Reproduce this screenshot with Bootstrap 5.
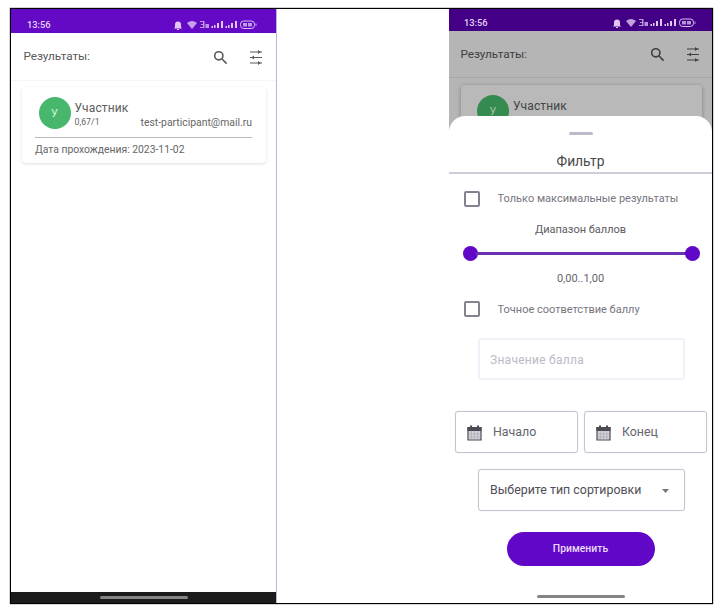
<!DOCTYPE html>
<html lang="ru">
<head>
<meta charset="utf-8">
<meta name="viewport" content="width=device-width, initial-scale=1">
<title>Результаты</title>
<link rel="stylesheet" href="https://cdn.jsdelivr.net/npm/bootstrap@5.3.0/dist/css/bootstrap.min.css">
<style>
body{height:612px;overflow:hidden;background:#fff;font-family:Roboto,sans-serif;color:#666;line-height:1}
.frame{width:703px;height:596px;margin:8px 0 0 10px;border:1px solid #000;box-shadow:0 0 1px #000}
.phone-a{width:266px;border-right:1px solid #bbb4dc}
.phone-b{width:263px}
.status{height:24px;background:#640ac6;color:#e6d3f5;padding:7px 19px 0 16px;font-size:9.3px;font-weight:500}
.tool{height:48px;padding:1px 13px 0 12.5px;font-size:11.8px;letter-spacing:-.1px;color:#5a5a5a;border-bottom:1px solid #f6f6f9}
.tool .lens{margin-right:21px}
.res{margin:6px 10px 0 11px;height:76px;border-radius:4px;box-shadow:0 1px 3px rgba(0,0,0,.14);padding:10px 14px 0 13px}
.res-head{height:41px;border-bottom:1px solid #b9b9b9}
.avatar{width:32px;height:32px;background:#46b76c;color:#d5f2dd;font-size:11px;margin-left:3.5px}
.person{font-size:12px;letter-spacing:.14px;color:#5c5c5c;padding-top:5px}
.meta{font-size:10.4px;margin-top:4px}
.score{font-size:8.8px}
.passed{font-size:10.4px;letter-spacing:-.02px;padding-top:7px}
.home-strip{height:11px;background:#1c1c1c;padding-top:4px}
.pill{width:88px;height:3px;background:#858585}
.dim{background:#b5b5b5;height:125px;overflow:hidden}
.dim .status{height:22px;background:#430086;padding:5px 16px 0 15px}
.dim .tool{height:47px;color:#3f3f3f;border-color:#a6a6a6;padding:1px 12px 0 11.5px}
.dim .res{background:#b9b9b9;box-shadow:0 1px 4px rgba(0,0,0,.3);margin:7px 10px 0 11.5px}
.dim .avatar{background:#348a4f;color:#9fc5aa}
.dim .person{color:#444}
.sheet{margin-top:-18px}
.sheet-top{height:58px;border-radius:16px 16px 0 0;background:#fff;padding-top:16px}
.sheet-body{border-top:2px solid #cfcdd9;margin-top:-2px;padding-top:1px;background:#fff}
.grip{width:24px;height:3px;background:#bcbac6}
.heading{font-size:13.8px;color:#484848;margin-top:20px}
.check{width:16px;height:16px;border:2px solid #858290;border-radius:2px;margin:0 17.5px 0 15px}
.opt{font-size:11px;color:#77757f}
.opt-max{height:47px}
.opt-exact{height:44px}
.range-label{height:15px;font-size:11px;color:#5d5b64;padding-top:2px}
.range-value{height:18px;font-size:11px;color:#66646d}
.slider{height:32px;padding:0 12.5px 0 14px}
.knob{width:15px;height:15px;background:#6108c8}
.track{height:3px;background:#6b31b0;margin:0 -2px}
.field{height:42px;border:1px solid #c6c4d0;border-radius:3px;padding:1px 11px 0;font-size:12.4px;color:#66646d;box-shadow:0 0 1px #c6c4d0}
.wide{width:207px;margin-left:29px}
.empty{border:2px solid #f1f0f8;box-shadow:none;color:#bcbac6;margin-top:7px;font-size:12px;letter-spacing:.27px;padding-left:10px}
.dates{margin:31px 5px 0 6px;gap:6px}
.dates svg{margin-right:11px}
.sort{margin-top:16px;color:#504e57}
.apply,.apply:hover{width:148px;height:34px;background:#6108c8;color:#eadcf8;font-size:10.4px;font-weight:500;line-height:1;margin-top:21px;border:0}
.sheet .pill{margin-top:29px}
</style>
</head>
<body>
<svg class="d-none">
  <symbol id="tray" viewBox="0 0 84 12"><g fill="#e0c8f2"><path d="M1 9.500h8L8 8V5.500a3 3 0 0 0-6 0V8zM4 10h2v1H4z"/><path d="M14 4q5-4 10 0l-5 6z" opacity=".8"/><path d="M27 2h4.500v7H27V8h3V6h-2V5h2V3h-3zM32.500 5H36v4h-3.500z" opacity=".75"/><path d="M38.500 7H40v2h-1.500zM41 6h1.500v3H41zM44 4h2v5h-2zM48 2h2v7h-2zM52.500 7H54v2h-1.500zM55 6h1.500v3H55zM58 4h2v5h-2zM62 2h2v7h-2z"/><rect x="67.500" y="2" width="14" height="7.500" rx="3.200" fill="none" stroke="#d9bff0"/><path d="M70 4h4v3.500h-4zM75 4h4v3.500h-4zM82.500 4.500h1v2.500h-1z" opacity=".75"/></g></symbol>
  <symbol id="lens" viewBox="0 0 15 15"><g fill="none" stroke="currentColor" stroke-width="1.600"><circle cx="5.800" cy="5.800" r="4.100"/><path d="M8.800 8.800l4.800 4.800"/></g></symbol>
  <symbol id="tune" viewBox="0 0 14 15"><path d="M1 2h12M1 7.500h12M1 13h12" stroke="currentColor" stroke-width="1.200"/><path d="M9 0l2.800 2L9 4zM5 5.500L2.200 7.500 5 9.500zM9 11l2.800 2L9 15z" fill="currentColor"/></symbol>
  <symbol id="cal" viewBox="0 0 15 16"><path d="M1 2.500h13V15H1z" fill="#d5d4da" stroke="#4c4a52" stroke-width="1.200"/><path d="M.5 2h14v4H.5zM3 .5h2V3H3zM10 .5h2V3h-2z" fill="#4c4a52"/><path d="M1 9h13M1 12h13M4.300 6v9M7.500 6v9M10.700 6v9" stroke="#a3a1aa" stroke-width=".6"/></symbol>
</svg>
<div class="frame d-flex justify-content-between overflow-hidden">
  <section class="phone-a d-flex flex-column">
    <div class="status d-flex align-items-center justify-content-between">
      <span>13:56</span>
      <svg width="84" height="12"><use href="#tray"/></svg>
    </div>
    <div class="tool d-flex align-items-center">
      <span class="me-auto">Результаты:</span>
      <svg class="lens" width="15" height="15"><use href="#lens"/></svg>
      <svg width="14" height="15"><use href="#tune"/></svg>
    </div>
    <div class="res">
      <div class="res-head d-flex">
        <div class="avatar rounded-circle d-flex align-items-center justify-content-center flex-shrink-0">У</div>
        <div class="ms-1 flex-grow-1">
          <div class="person">Участник</div>
          <div class="meta d-flex justify-content-between"><span class="score">0,67/1</span><span>test-participant@mail.ru</span></div>
        </div>
      </div>
      <div class="passed">Дата прохождения: 2023-11-02</div>
    </div>
    <div class="home-strip mt-auto"><div class="pill rounded-pill mx-auto"></div></div>
  </section>
  <section class="phone-b">
    <div class="dim">
      <div class="status d-flex align-items-center justify-content-between">
        <span>13:56</span>
        <svg width="84" height="12"><use href="#tray"/></svg>
      </div>
      <div class="tool d-flex align-items-center">
        <span class="me-auto">Результаты:</span>
        <svg class="lens" width="15" height="15"><use href="#lens"/></svg>
        <svg width="14" height="15"><use href="#tune"/></svg>
      </div>
      <div class="res d-flex">
        <div class="avatar rounded-circle d-flex align-items-center justify-content-center flex-shrink-0">У</div>
        <div class="person ms-1">Участник</div>
      </div>
    </div>
    <div class="sheet position-relative">
      <div class="sheet-top">
        <div class="grip rounded-pill mx-auto"></div>
        <div class="heading text-center">Фильтр</div>
      </div>
      <div class="sheet-body">
        <div class="opt opt-max d-flex align-items-center"><span class="check"></span><span>Только максимальные результаты</span></div>
        <div class="range-label text-center">Диапазон баллов</div>
        <div class="slider d-flex align-items-center"><span class="knob rounded-circle"></span><span class="track flex-grow-1"></span><span class="knob rounded-circle"></span></div>
        <div class="range-value d-flex align-items-center justify-content-center">0,00..1,00</div>
        <div class="opt opt-exact d-flex align-items-center"><span class="check"></span><span>Точное соответствие баллу</span></div>
        <div class="field wide empty d-flex align-items-center">Значение балла</div>
        <div class="dates d-flex">
          <div class="field flex-fill w-50 d-flex align-items-center"><svg width="15" height="16"><use href="#cal"/></svg>Начало</div>
          <div class="field flex-fill w-50 d-flex align-items-center"><svg width="15" height="16"><use href="#cal"/></svg>Конец</div>
        </div>
        <div class="field wide sort d-flex align-items-center justify-content-between">Выберите тип сортировки<svg class="me-1" width="7" height="4" viewBox="0 0 7 4"><path d="M0 0h7L3.500 4z" fill="#77757f"/></svg></div>
        <button class="apply btn rounded-pill d-block mx-auto p-0">Применить</button>
        <div class="pill rounded-pill mx-auto"></div>
      </div>
    </div>
  </section>
</div>
<script src="https://cdn.jsdelivr.net/npm/bootstrap@5.3.0/dist/js/bootstrap.bundle.min.js"></script>
</body>
</html>
